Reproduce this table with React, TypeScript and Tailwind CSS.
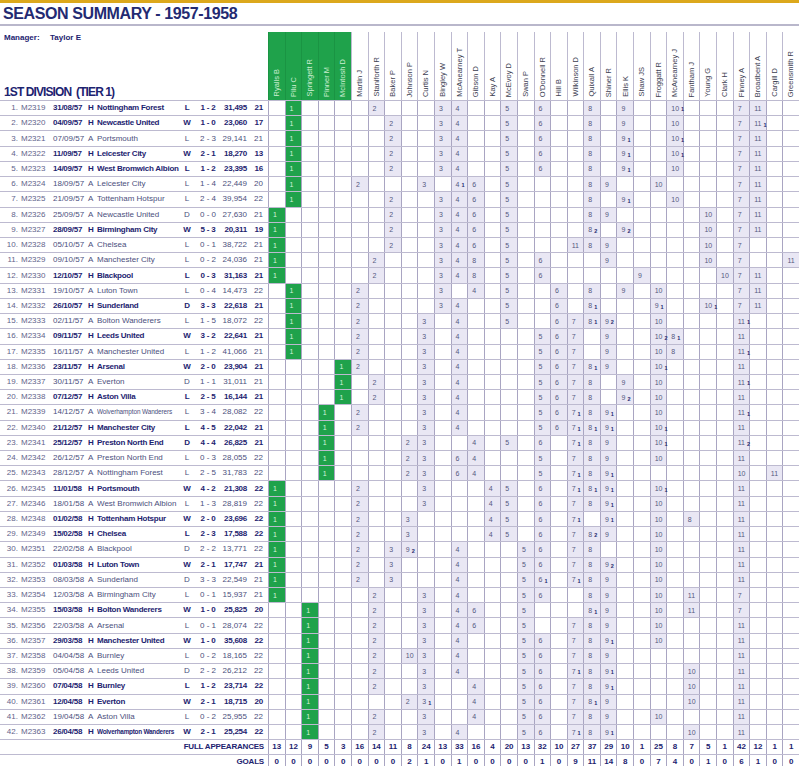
import React from 'react';

const players = [
  'Ryalls B', 'Pilu C', 'Springett R', 'Pinner M', 'McIntosh D', 'Martin J', 'Staniforth R', 'Baker P',
  'Johnson P', 'Curtis N', 'Bingley W', 'McAnearney T', 'Gibson D', 'Kay A', 'McEvoy D', 'Swan P',
  "O'Donnell R", 'Hill B', 'Wilkinson D', 'Quixall A', 'Shiner R', 'Ellis K', 'Shaw JS', 'Froggatt R',
  'McAnearney J', 'Fantham J', 'Young G', 'Clark H', 'Finney A', 'Broadbent A', 'Cargill D', 'Greensmith R',
];

// goalkeepers get the green column header
const KEEPERS = 5;

// n, code, date, venue, opponent, result, score, attendance, position, line-up ("col:shirt/goals")
const matches: [number, string, string, string, string, string, string, string, number, string][] = [
  [1, 'M2319', '31/08/57', 'H', 'Nottingham Forest', 'L', '1 - 2', '31,495', 21, '1:1 6:2 10:3 11:4 14:5 16:6 19:8 21:9 24:10/1 28:7 29:11'],
  [2, 'M2320', '04/09/57', 'H', 'Newcastle United', 'W', '1 - 0', '23,060', 17, '1:1 7:2 10:3 11:4 14:5 16:6 19:8 21:9 24:10 28:7 29:11/1'],
  [3, 'M2321', '07/09/57', 'A', 'Portsmouth', 'L', '2 - 3', '29,141', 21, '1:1 7:2 10:3 11:4 14:5 16:6 19:8 21:9/1 24:10/1 28:7 29:11'],
  [4, 'M2322', '11/09/57', 'H', 'Leicester City', 'W', '2 - 1', '18,270', 13, '1:1 7:2 10:3 11:4 14:5 16:6 19:8 21:9/1 24:10/1 28:7 29:11'],
  [5, 'M2323', '14/09/57', 'H', 'West Bromwich Albion', 'L', '1 - 2', '23,395', 16, '1:1 7:2 10:3 11:4 14:5 16:6 19:8 21:9/1 24:10 28:7 29:11'],
  [6, 'M2324', '18/09/57', 'A', 'Leicester City', 'L', '1 - 4', '22,449', 20, '1:1 5:2 9:3 11:4/1 12:6 14:5 19:8 20:9 23:10 28:7 29:11'],
  [7, 'M2325', '21/09/57', 'A', 'Tottenham Hotspur', 'L', '2 - 4', '39,954', 22, '1:1 7:2 10:3 11:4 12:6 14:5 19:8 21:9/1 24:10 28:7 29:11'],
  [8, 'M2326', '25/09/57', 'A', 'Newcastle United', 'D', '0 - 0', '27,630', 21, '0:1 7:2 10:3 11:4 12:6 14:5 19:8 20:9 26:10 28:7 29:11'],
  [9, 'M2327', '28/09/57', 'H', 'Birmingham City', 'W', '5 - 3', '20,311', 19, '0:1 7:2 10:3 11:4 12:6 14:5 19:8/2 21:9/2 26:10 28:7 29:11'],
  [10, 'M2328', '05/10/57', 'A', 'Chelsea', 'L', '0 - 1', '38,722', 21, '0:1 7:2 10:3 11:4 12:6 14:5 18:11 19:8 20:9 26:10 28:7'],
  [11, 'M2329', '09/10/57', 'A', 'Manchester City', 'L', '0 - 2', '24,036', 21, '0:1 6:2 10:3 11:4 12:8 14:5 16:6 20:9 26:10 28:7 31:11'],
  [12, 'M2330', '12/10/57', 'H', 'Blackpool', 'L', '0 - 3', '31,163', 21, '0:1 6:2 10:3 11:4 12:8 14:5 16:6 22:9 27:10 28:7 29:11'],
  [13, 'M2331', '19/10/57', 'A', 'Luton Town', 'L', '0 - 4', '14,473', 22, '1:1 5:2 10:3 12:4 14:5 17:6 19:8 21:9 23:10 28:7 29:11'],
  [14, 'M2332', '26/10/57', 'H', 'Sunderland', 'D', '3 - 3', '22,618', 21, '1:1 5:2 10:3 11:4 14:5 17:6 19:8/1 23:9/1 26:10/1 28:7 29:11'],
  [15, 'M2333', '02/11/57', 'A', 'Bolton Wanderers', 'L', '1 - 5', '18,072', 22, '1:1 5:2 9:3 11:4 14:5 17:6 18:7 19:8/1 20:9/2 23:10 28:11/1'],
  [16, 'M2334', '09/11/57', 'H', 'Leeds United', 'W', '3 - 2', '22,641', 21, '1:1 5:2 9:3 11:4 16:5 17:6 18:7 20:9 23:10/2 24:8/1 28:11'],
  [17, 'M2335', '16/11/57', 'A', 'Manchester United', 'L', '1 - 2', '41,066', 21, '1:1 5:2 9:3 11:4 16:5 17:6 18:7 20:9 23:10 24:8 28:11/1'],
  [18, 'M2336', '23/11/57', 'H', 'Arsenal', 'W', '2 - 0', '23,904', 21, '4:1 5:2 9:3 11:4 16:5 17:6 18:7 19:8/1 20:9 23:10/1 28:11'],
  [19, 'M2337', '30/11/57', 'A', 'Everton', 'D', '1 - 1', '31,011', 21, '4:1 6:2 9:3 11:4 16:5 17:6 18:7 19:8 21:9 23:10 28:11/1'],
  [20, 'M2338', '07/12/57', 'H', 'Aston Villa', 'L', '2 - 5', '16,144', 21, '4:1 6:2 9:3 11:4 16:5 17:6 18:7 19:8 21:9/2 23:10 28:11'],
  [21, 'M2339', '14/12/57', 'A', 'Wolverhampton Wanderers', 'L', '3 - 4', '28,082', 22, '3:1 5:2 9:3 11:4 16:5 17:6 18:7/1 19:8 20:9/1 23:10 28:11/1'],
  [22, 'M2340', '21/12/57', 'H', 'Manchester City', 'L', '4 - 5', '22,042', 21, '3:1 5:2 9:3 11:4 16:5 17:6 18:7/1 19:8/1 20:9/1 23:10/1 28:11'],
  [23, 'M2341', '25/12/57', 'H', 'Preston North End', 'D', '4 - 4', '26,825', 21, '3:1 8:2 9:3 12:4 14:5 16:6 18:7/1 19:8 20:9 23:10/1 28:11/2'],
  [24, 'M2342', '26/12/57', 'A', 'Preston North End', 'L', '0 - 3', '28,055', 22, '3:1 8:2 9:3 11:6 12:4 16:5 18:7 19:8 20:9 23:10 28:11'],
  [25, 'M2343', '28/12/57', 'A', 'Nottingham Forest', 'L', '2 - 5', '31,783', 22, '3:1 8:2 9:3 11:6 12:4 16:5 18:7/1 19:8 20:9/1 28:10 30:11'],
  [26, 'M2345', '11/01/58', 'H', 'Portsmouth', 'W', '4 - 2', '21,308', 22, '0:1 5:2 9:3 13:4 14:5 16:6 18:7/1 19:8/1 20:9/1 23:10/1 28:11'],
  [27, 'M2346', '18/01/58', 'A', 'West Bromwich Albion', 'L', '1 - 3', '28,819', 22, '0:1 5:2 9:3 13:4 14:5 16:6 18:7 19:8 20:9/1 23:10 28:11'],
  [28, 'M2348', '01/02/58', 'H', 'Tottenham Hotspur', 'W', '2 - 0', '23,696', 22, '0:1 5:2 8:3 13:4 14:5 16:6 18:7/1 20:9/1 23:10 25:8 28:11'],
  [29, 'M2349', '15/02/58', 'H', 'Chelsea', 'L', '2 - 3', '17,588', 22, '0:1 5:2 8:3 13:4 14:5 16:6 18:7 19:8/2 20:9 23:10 28:11'],
  [30, 'M2351', '22/02/58', 'A', 'Blackpool', 'D', '2 - 2', '13,771', 22, '0:1 5:2 7:3 8:9/2 11:4 15:5 16:6 18:7 19:8 23:10 28:11'],
  [31, 'M2352', '01/03/58', 'H', 'Luton Town', 'W', '2 - 1', '17,747', 21, '0:1 5:2 7:3 11:4 15:5 16:6 18:7 19:8 20:9/2 23:10 28:11'],
  [32, 'M2353', '08/03/58', 'A', 'Sunderland', 'D', '3 - 3', '22,549', 21, '0:1 5:2 7:3 11:4 15:5 16:6/1 18:7/1 19:8 20:9 23:10 28:11'],
  [33, 'M2354', '12/03/58', 'A', 'Birmingham City', 'L', '0 - 1', '15,937', 21, '0:1 6:2 9:3 11:4 15:5 16:6 19:8 20:9 23:10 25:11 28:7'],
  [34, 'M2355', '15/03/58', 'H', 'Bolton Wanderers', 'W', '1 - 0', '25,825', 20, '2:1 6:2 9:3 11:4 12:6 15:5 19:8/1 20:9 23:10 25:11 28:7'],
  [35, 'M2356', '22/03/58', 'A', 'Arsenal', 'L', '0 - 1', '28,074', 22, '2:1 6:2 9:3 11:4 12:6 15:5 18:7 19:8 20:9 23:10 28:11'],
  [36, 'M2357', '29/03/58', 'H', 'Manchester United', 'W', '1 - 0', '35,608', 22, '2:1 6:2 9:3 11:4 15:5 16:6 18:7 19:8 20:9/1 23:10 28:11'],
  [37, 'M2358', '04/04/58', 'A', 'Burnley', 'L', '0 - 2', '18,165', 22, '2:1 6:2 8:10 9:3 11:4 15:5 16:6 18:7 19:8 20:9 28:11'],
  [38, 'M2359', '05/04/58', 'A', 'Leeds United', 'D', '2 - 2', '26,212', 22, '2:1 6:2 9:3 11:4 15:5 16:6 18:7/1 19:8 20:9/1 25:10 28:11'],
  [39, 'M2360', '07/04/58', 'H', 'Burnley', 'L', '1 - 2', '23,714', 22, '2:1 6:2 9:3 12:4 15:5 16:6 18:7 19:8 20:9/1 25:10 28:11'],
  [40, 'M2361', '12/04/58', 'H', 'Everton', 'W', '2 - 1', '18,715', 20, '2:1 8:2 9:3/1 12:4 15:5 16:6 18:7 19:8/1 20:9 25:10 28:11'],
  [41, 'M2362', '19/04/58', 'A', 'Aston Villa', 'L', '0 - 2', '25,955', 22, '2:1 6:2 9:3 12:4 15:5 16:6 18:7 19:8 20:9 23:10 28:11'],
  [42, 'M2363', '26/04/58', 'H', 'Wolverhampton Wanderers', 'W', '2 - 1', '25,254', 22, '2:1 6:2 9:3 11:4 15:5 16:6 18:7/1 19:8 20:9/1 25:10 28:11'],
];

const appearances = [13, 12, 9, 5, 3, 16, 14, 11, 8, 24, 13, 33, 16, 4, 20, 13, 32, 10, 27, 37, 29, 10, 1, 25, 8, 7, 5, 1, 42, 12, 1, 1];
const goals = [0, 0, 0, 0, 0, 0, 0, 0, 2, 1, 0, 1, 0, 0, 0, 0, 1, 0, 9, 11, 14, 8, 0, 7, 4, 0, 1, 0, 6, 1, 0, 0];

function parseLineup(s: string) {
  const cells: Record<number, { shirt: string; goals?: string }> = {};
  s.split(' ').forEach(tok => {
    const [col, rest] = tok.split(':');
    const [shirt, g] = rest.split('/');
    cells[Number(col)] = { shirt, goals: g };
  });
  return cells;
}

function MatchRow({ m }: { m: (typeof matches)[number] }) {
  const [n, code, date, venue, opp, res, score, att, pos, lineup] = m;
  const home = venue === 'H';
  const cells = parseLineup(lineup);
  const main = home ? 'font-bold text-[#1d2370] tracking-[-0.25px]' : 'text-[#4b4f7d]';
  const long = opp.length > 20;

  return (
    <div className="flex h-[15.22px] border-b border-[#bdbad0]">
      <div className="flex w-[268px] shrink-0 items-center text-[8px] leading-none whitespace-nowrap">
        <span className="w-[18px] text-right text-[#5f638b]">{n}.</span>
        <span className="w-[32px] pl-[3px] text-[#5f638b]">{code}</span>
        <span className={`w-[35px] pl-[3px] ${main}`}>{date}</span>
        <span className={`w-[12px] pl-[3px] ${main}`}>{venue}</span>
        <span className={`w-[83px] overflow-hidden ${main} ${long ? 'text-[6.4px] tracking-[-0.1px]' : ''}`}>{opp}</span>
        <span className={`w-[14px] text-center ${main}`}>{res}</span>
        <span className={`w-[28px] text-center whitespace-pre ${main}`}>{score}</span>
        <span className={`w-[25px] text-right ${main}`}>{att}</span>
        <span className={`w-[16px] text-right ${main}`}>{pos}</span>
      </div>
      {players.map((_, i) => {
        const c = cells[i];
        const keeper = c && i < KEEPERS;
        const bg = keeper ? 'bg-[#1fa24b]' : c ? 'bg-[#e9e7f4]' : '';
        return (
          <div
            key={i}
            className={`flex min-w-0 flex-1 items-center border-l border-[#a9a5c2] pl-[4px] text-[7px] leading-none whitespace-nowrap ${bg} ${keeper ? 'text-[#d6f3dc]' : 'text-[#55597f]'}`}
          >
            {c && (
              <>
                <span>{c.shirt}</span>
                {c.goals && (
                  <span className="relative top-[2px] ml-[2px] text-[5.5px] font-bold text-[#25296e]">{c.goals}</span>
                )}
              </>
            )}
          </div>
        );
      })}
    </div>
  );
}

function TotalsRow({ label, values }: { label: string; values: number[] }) {
  return (
    <div className="flex h-[15px] border-b border-[#bdbad0]">
      <div className="flex w-[268px] shrink-0 items-center justify-end pr-[4px] text-[8px] font-bold tracking-[-0.2px] text-[#1d2370]">
        {label}
      </div>
      {values.map((v, i) => (
        <div
          key={i}
          className="flex min-w-0 flex-1 items-center justify-center border-l border-[#a9a5c2] text-[8px] font-bold text-[#1d2370]"
        >
          {v}
        </div>
      ))}
    </div>
  );
}

export default function App() {
  return (
    <div className="w-[799px] overflow-hidden bg-white font-['Liberation_Sans',Arial,sans-serif]">
      <div className="h-[3px] bg-[#dca81c]" />
      <div className="flex h-[21px] items-center pl-[3px] text-[16px] font-bold tracking-[-0.4px] text-[#232a72]">
        SEASON SUMMARY - 1957-1958
      </div>
      <div className="h-[2px] bg-[#b9b7cb]" />

      <div className="mt-[6px] flex h-[68px]">
        <div className="flex w-[268px] shrink-0 flex-col justify-between pl-[4px]">
          <div className="flex h-[12px] items-center text-[8px] font-bold text-[#1d2370]">
            <span className="w-[46px]">Manager:</span>
            <span>Taylor E</span>
          </div>
          <div className="pb-[1px] text-[12px] font-bold leading-[14px] tracking-[-0.9px] whitespace-pre text-[#1d2370]">
            1ST DIVISION  (TIER 1)
          </div>
        </div>
        {players.map((p, i) => {
          const keeper = i < KEEPERS;
          return (
            <div
              key={p}
              className={`flex min-w-0 flex-1 flex-col items-center justify-end border-l pb-[3px] ${keeper ? 'border-[#1a9443] bg-[#1fa24b] text-[#cdeed3]' : 'border-[#bdbad0] text-[#3c3e52]'}`}
            >
              <span className="rotate-180 text-[7.5px] leading-none whitespace-nowrap [writing-mode:vertical-rl]">
                {p}
              </span>
            </div>
          );
        })}
      </div>

      <div className="border-t border-[#bdbad0]">
        {matches.map(m => (
          <MatchRow key={m[0]} m={m} />
        ))}
        <TotalsRow label="FULL APPEARANCES" values={appearances} />
        <TotalsRow label="GOALS" values={goals} />
      </div>
    </div>
  );
}
